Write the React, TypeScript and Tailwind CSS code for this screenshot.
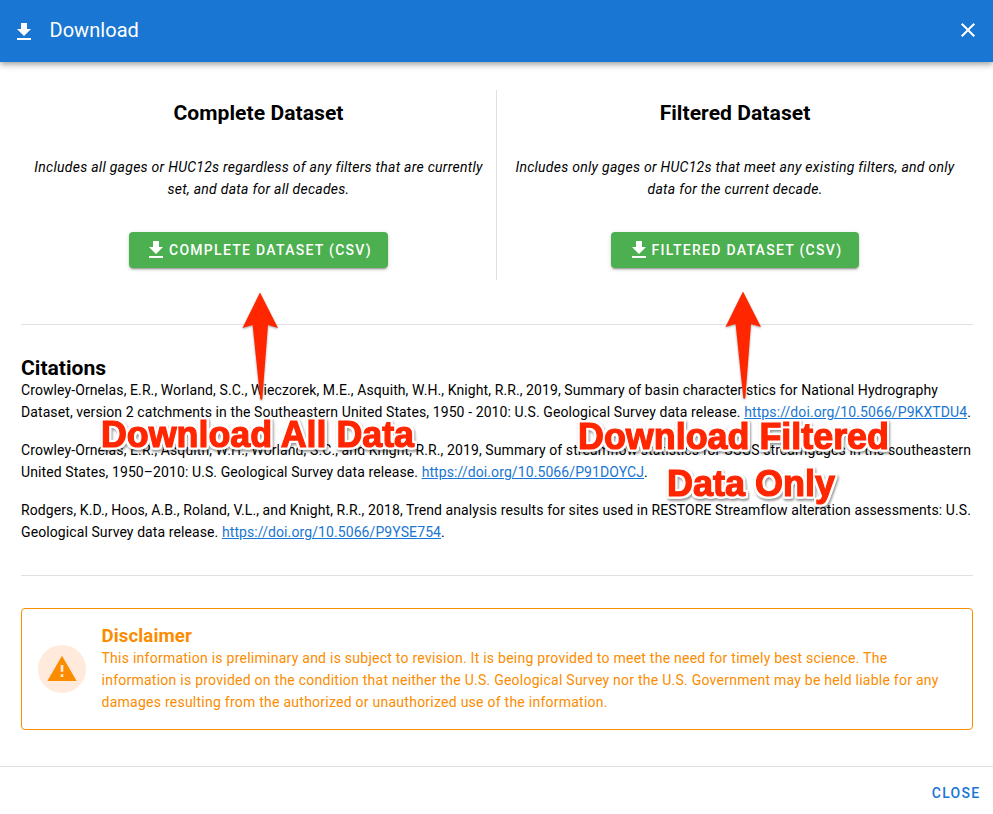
import React from "react";

const DOWNLOAD = "M5,20H19V18H5M19,9H15V3H9V9H5L12,16L19,9Z";
const CLOSE = "M19,6.41L17.59,5L12,10.59L6.41,5L5,6.41L10.59,12L5,17.59L6.41,19L12,13.41L17.59,19L19,17.59L13.41,12L19,6.41Z";
const ALERT = "M13 14H11V9H13M13 18H11V16H13M1 21H23L12 2L1 21Z";

function Icon({ path, className }: { path: string; className: string }) {
  return (
    <svg viewBox="0 0 24 24" fill="currentColor" className={className}>
      <path d={path} />
    </svg>
  );
}

function DatasetPanel({ title, lines, label, className }: { title: string; lines: string[]; label: string; className: string }) {
  return (
    <section className={`flex flex-col items-center ${className}`}>
      <h2 className="mt-[7px] text-[21.1px] leading-8 font-bold tracking-[0.04px]">{title}</h2>
      <p className="mt-[27px] text-center text-[14px] leading-[22px] tracking-[0.27px] whitespace-nowrap italic">
        {lines[0]}
        <br />
        {lines[1]}
      </p>
      <button className="mt-8 flex h-9 items-center rounded-[4px] bg-[#4caf50] px-[16.5px] text-[14px] font-medium tracking-[1.28px] whitespace-nowrap text-white shadow-[0_3px_1px_-2px_rgba(0,0,0,0.2),0_2px_2px_0_rgba(0,0,0,0.14),0_1px_5px_0_rgba(0,0,0,0.12)]">
        <Icon path={DOWNLOAD} className="-ml-px size-6" />
        <span className="ml-px">{label}</span>
      </button>
    </section>
  );
}

function DoiLink({ children }: { children: string }) {
  return <a className="text-[#1976d2] underline">{children}</a>;
}

function Arrow({ className }: { className: string }) {
  return (
    <svg viewBox="0 0 40 116" className={`absolute h-[116px] w-10 drop-shadow-[0_1px_1px_rgba(0,0,0,0.35)] ${className}`}>
      <path fill="#ff2600" d="M20 2.5L38 38L28 35L22.3 109Q21.3 110.5 20.3 109L12.6 35L2.5 38Z" />
    </svg>
  );
}

function Callout({ text, className, width }: { text: string; className: string; width: number }) {
  return (
    <svg
      className={`absolute h-12 w-[340px] overflow-visible [filter:drop-shadow(2px_0_0_white)_drop-shadow(-2px_0_0_white)_drop-shadow(0_2px_0_white)_drop-shadow(0_-2px_0_white)_drop-shadow(1px_2px_1px_rgba(0,0,0,0.4))] ${className}`}
    >
      <text
        x="0"
        y="34"
        textLength={width}
        lengthAdjust="spacingAndGlyphs"
        className="fill-[#ff2600] stroke-[#ff2600] stroke-[1.2px] font-['Liberation_Sans',sans-serif] text-[36px] font-bold"
      >
        {text}
      </text>
    </svg>
  );
}

export default function App() {
  return (
    <div className="relative flex h-[814px] w-[993px] flex-col overflow-hidden bg-white font-[Roboto,sans-serif] text-black">
      <header className="flex h-[62px] shrink-0 items-center bg-[#1976d2] text-white shadow-[0_2px_4px_-1px_rgba(0,0,0,0.2),0_4px_5px_0_rgba(0,0,0,0.14),0_1px_10px_0_rgba(0,0,0,0.12)]">
        <Icon path={DOWNLOAD} className="ml-[12.4px] mt-px size-6" />
        <h1 className="mb-[2px] ml-[13.1px] flex-1 text-[20px] tracking-[0.05px]">Download</h1>
        <Icon path={CLOSE} className="mr-[13px] mb-[2px] size-6" />
      </header>

      <main className="flex flex-col pr-5 pl-[21px]">
        <div className="mt-7 flex h-[190px]">
          <DatasetPanel
            className="w-[476px] border-r border-[#e0e0e0]"
            title="Complete Dataset"
            lines={["Includes all gages or HUC12s regardless of any filters that are currently", "set, and data for all decades."]}
            label="COMPLETE DATASET (CSV)"
          />
          <DatasetPanel
            className="flex-1"
            title="Filtered Dataset"
            lines={["Includes only gages or HUC12s that meet any existing filters, and only", "data for the current decade."]}
            label="FILTERED DATASET (CSV)"
          />
        </div>
        <hr className="mt-11 border-[#e0e0e0]" />

        <section className="mt-8 text-[14px] leading-[22px] tracking-[0.094px] whitespace-nowrap">
          <h2 className="text-[21.1px] leading-[22px] font-bold tracking-normal">Citations</h2>
          <p>
            Crowley-Ornelas, E.R., Worland, S.C., Wieczorek, M.E., Asquith, W.H., Knight, R.R., 2019, Summary of basin characteristics for National Hydrography
            <br />
            Dataset, version 2 catchments in the Southeastern United States, 1950 - 2010: U.S. Geological Survey data release. <DoiLink>https://doi.org/10.5066/P9KXTDU4</DoiLink>.
          </p>
          <p className="mt-4">
            Crowley-Ornelas, E.R., Asquith, W.H., Worland, S.C., and Knight, R.R., 2019, Summary of streamflow statistics for USGS streamgages in the southeastern
            <br />
            United States, 1950–2010: U.S. Geological Survey data release. <DoiLink>https://doi.org/10.5066/P91DOYCJ</DoiLink>.
          </p>
          <p className="mt-4">
            Rodgers, K.D., Hoos, A.B., Roland, V.L., and Knight, R.R., 2018, Trend analysis results for sites used in RESTORE Streamflow alteration assessments: U.S.
            <br />
            Geological Survey data release. <DoiLink>https://doi.org/10.5066/P9YSE754</DoiLink>.
          </p>
        </section>
        <hr className="mt-8 border-[#e0e0e0]" />

        <section className="mt-8 flex h-[122px] items-center rounded-[4px] border border-[#fb8c00] pl-4 text-[#fb8c00]">
          <div className="flex size-12 shrink-0 items-center justify-center rounded-full bg-[#ffeadb]">
            <Icon path={ALERT} className="mr-px size-8" />
          </div>
          <div className="ml-[15.5px] whitespace-nowrap">
            <h2 className="text-[18.72px] leading-[22px] font-bold tracking-[0.08px]">Disclaimer</h2>
            <p className="text-[14px] leading-[22px] tracking-[0.25px]">
              This information is preliminary and is subject to revision. It is being provided to meet the need for timely best science. The
              <br />
              information is provided on the condition that neither the U.S. Geological Survey nor the U.S. Government may be held liable for any
              <br />
              damages resulting from the authorized or unauthorized use of the information.
            </p>
          </div>
        </section>
      </main>

      <footer className="mt-9 flex h-[48px] items-center justify-end border-t border-[#e0e0e0] pt-[5px] pr-[12.6px]">
        <button className="text-[14px] font-medium tracking-[1.25px] text-[#1976d2]">CLOSE</button>
      </footer>

      <Arrow className="top-[290px] left-[240px]" />
      <Arrow className="top-[289px] left-[723px]" />
      <Callout text="Download All Data" width={313} className="top-[413px] left-[101px]" />
      <Callout text="Download Filtered" width={311} className="top-[415px] left-[578px]" />
      <Callout text="Data Only" width={168} className="top-[462px] left-[667px]" />
    </div>
  );
}
